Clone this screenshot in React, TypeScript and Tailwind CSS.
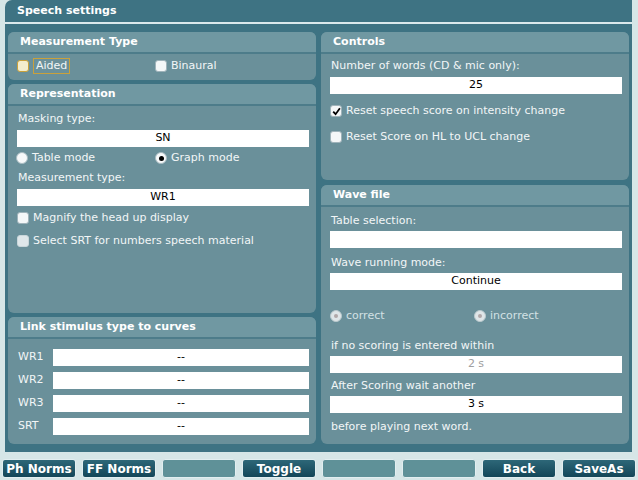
import React from "react";

const font = { fontFamily: '"DejaVu Sans", Verdana, sans-serif' };

function Panel({ title, className, children }: { title: string; className?: string; children?: React.ReactNode }) {
  return (
    <div className={`rounded-[6px] bg-[#6a909a] overflow-hidden flex flex-col ${className ?? ""}`}>
      <div className="h-[22px] shrink-0 bg-[#7098a2] border-b-2 border-[#4d7c8a] pl-[12px] flex items-center text-[11px] font-bold text-white">
        {title}
      </div>
      <div className="flex-1 pl-[9px] pr-[7px]">{children}</div>
    </div>
  );
}

function Field({ value, muted, className }: { value?: string; muted?: boolean; className?: string }) {
  return (
    <div
      className={`h-[17px] bg-white flex items-center justify-center text-[11px] ${muted ? "text-[#a0a0a0]" : "text-black"} ${className ?? ""}`}
    >
      {value}
    </div>
  );
}

function Label({ children, className }: { children: React.ReactNode; className?: string }) {
  return <div className={`h-[16px] flex items-center pl-[1px] text-[11px] text-[#f2f6f7] ${className ?? ""}`}>{children}</div>;
}

function Box({ checked, focus, faded }: { checked?: boolean; focus?: boolean; faded?: boolean }) {
  return (
    <span
      className={`w-[12px] h-[12px] rounded-[3px] shrink-0 flex items-center justify-center border ${
        focus
          ? "bg-[#f4edcd] border-[#c9a13b]"
          : faded
          ? "bg-[#dfe7ea] border-[#c9d6da]"
          : "bg-[#f4f7f8] border-[#9fb3ba]"
      }`}
    >
      {checked && (
        <svg width="9" height="9" viewBox="0 0 9 9">
          <path d="M1.2 4.6 L3.6 7.2 L7.9 1.2" fill="none" stroke="#000" strokeWidth="1.8" />
        </svg>
      )}
    </span>
  );
}

function Check({ label, checked, focus, faded, className }: { label: string; checked?: boolean; focus?: boolean; faded?: boolean; className?: string }) {
  return (
    <div className={`h-[16px] flex items-center gap-[4px] text-[11px] text-[#f2f6f7] ${className ?? ""}`}>
      <Box checked={checked} focus={focus} faded={faded} />
      {focus ? <span className="border border-[#c9a13b] px-[2px] leading-[14px]">{label}</span> : <span>{label}</span>}
    </div>
  );
}

function Radio({ label, selected, disabled }: { label: string; selected?: boolean; disabled?: boolean }) {
  return (
    <div className={`flex items-center gap-[4px] text-[11px] ${disabled ? "text-[#d3e1e4]" : "text-[#f2f6f7]"}`}>
      <span
        className={`w-[12px] h-[12px] rounded-full flex items-center justify-center border ${
          disabled ? "bg-[#dfe6e8] border-[#b9c9cd]" : "bg-[#f7f9fa] border-[#a9bcc2]"
        }`}
      >
        {selected && <span className="w-[5px] h-[5px] rounded-full bg-black" />}
        {disabled && <span className="w-[4px] h-[4px] rounded-full bg-[#b0a8a8]" />}
      </span>
      {label}
    </div>
  );
}

function Btn({ label }: { label?: string }) {
  return (
    <div
      className={`w-[74px] h-[19px] rounded-[3px] border border-[#e2eef0] flex items-center justify-center text-[12px] font-bold text-white ${
        label ? "bg-gradient-to-b from-[#2d6778] to-[#134658]" : "bg-[#5f9198]"
      }`}
    >
      {label}
    </div>
  );
}

export default function App() {
  return (
    <div className="w-[638px] h-[480px] bg-[#d6e6e7] overflow-hidden" style={font}>
      <div className="ml-[5px] w-[627px] h-[452px] bg-[#3e7383] rounded-tl-[7px] flex flex-col">
        <div className="h-[22px] pl-[12px] flex items-center text-[11px] font-bold text-white">Speech settings</div>
        <div className="h-[2px] bg-[#dbe9ec]" />
        <div className="grid grid-cols-2 gap-[5px] px-[3px] pt-[8px]">
          <div className="flex flex-col gap-[4px]">
            <Panel title="Measurement Type" className="h-[48px]">
              <div className="flex items-center h-[24px]">
                <div className="w-[138px]">
                  <Check label="Aided" focus />
                </div>
                <Check label="Binaural" />
              </div>
            </Panel>
            <Panel title="Representation" className="h-[229px]">
              <Label className="mt-[5px]">Masking type:</Label>
              <Field value="SN" className="mt-[3px]" />
              <div className="flex items-center h-[16px] mt-[3px] -ml-[1px]">
                <div className="w-[139px]">
                  <Radio label="Table mode" />
                </div>
                <Radio label="Graph mode" selected />
              </div>
              <Label className="mt-[4px]">Measurement type:</Label>
              <Field value="WR1" className="mt-[3px]" />
              <Check label="Magnify the head up display" className="mt-[4px]" />
              <Check label="Select SRT for numbers speech material" faded className="mt-[7px]" />
            </Panel>
            <Panel title="Link stimulus type to curves" className="h-[127px]">
              <div className="flex flex-col gap-[6px] pt-[10px]">
                {["WR1", "WR2", "WR3", "SRT"].map((k) => (
                  <div key={k} className="flex items-center">
                    <div className="w-[36px] text-[11px] text-[#f2f6f7] pl-[1px]">{k}</div>
                    <Field value="--" className="flex-1" />
                  </div>
                ))}
              </div>
            </Panel>
          </div>
          <div className="flex flex-col gap-[5px]">
            <Panel title="Controls" className="h-[148px]">
              <Label className="mt-[4px]">Number of words (CD &amp; mic only):</Label>
              <Field value="25" className="mt-[3px]" />
              <Check label="Reset speech score on intensity change" checked className="mt-[9px]" />
              <Check label="Reset Score on HL to UCL change" className="mt-[10px]" />
            </Panel>
            <Panel title="Wave file" className="h-[259px]">
              <Label className="mt-[6px]">Table selection:</Label>
              <Field className="mt-[2px]" />
              <Label className="mt-[7px]">Wave running mode:</Label>
              <Field value="Continue" className="mt-[2px]" />
              <div className="flex items-center h-[16px] mt-[18px]">
                <div className="w-[144px]">
                  <Radio label="correct" disabled />
                </div>
                <Radio label="incorrect" disabled />
              </div>
              <Label className="mt-[14px]">if no scoring is entered within</Label>
              <Field value="2 s" muted className="mt-[2px]" />
              <Label className="mt-[5px]">After Scoring wait another</Label>
              <Field value="3 s" className="mt-[2px]" />
              <Label className="mt-[6px]">before playing next word.</Label>
            </Panel>
          </div>
        </div>
      </div>
      <div className="flex gap-[6px] pl-[2px] mt-[7px]">
        <Btn label="Ph Norms" />
        <Btn label="FF Norms" />
        <Btn />
        <Btn label="Toggle" />
        <Btn />
        <Btn />
        <Btn label="Back" />
        <Btn label="SaveAs" />
      </div>
    </div>
  );
}
